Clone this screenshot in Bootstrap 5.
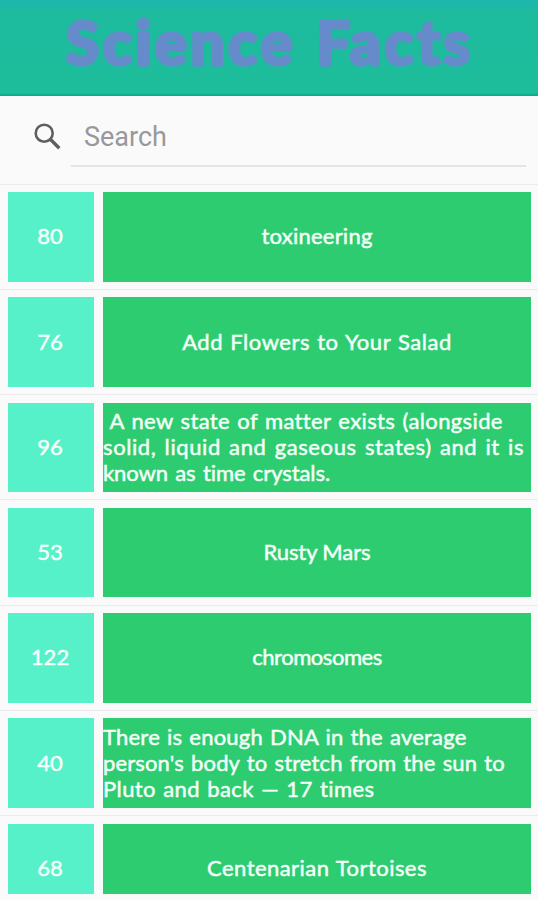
<!DOCTYPE html>
<html lang="en">
<head>
<meta charset="utf-8">
<meta name="viewport" content="width=device-width, initial-scale=1">
<title>Science Facts</title>
<link href="https://cdn.jsdelivr.net/npm/bootstrap@5.3.0/dist/css/bootstrap.min.css" rel="stylesheet">
<style>
body{font-family:Lato,sans-serif;background:#fafafb;height:900px}
.app-header{height:95.5px;background:linear-gradient(#1eb5ad 0,#1ebb9e 12px,#1dbd9b 93px,#12a888 95px)}
.app-title{font-size:60px;line-height:61px;font-weight:900;color:#668bcb;-webkit-text-stroke:3.2px #668bcb;letter-spacing:3.7px;word-spacing:2px;padding:12px 0 0 66px}
.search-bar{height:88px;padding:0 12px 0 34px}
.search-icon{width:27px;height:27px;margin-top:27px}
.search-field{margin-left:10px;height:71.5px;border-bottom:2px solid #e4e4e5}
.search-field input,.search-field input:focus{font:27px/32px Roboto,sans-serif;color:#555;background:none;box-shadow:none;padding:25px 0 0 13px}
.search-field input::placeholder{color:#989899;opacity:1}
.fact{height:105.3px;padding:7.5px 7px 7.3px 8px;border-top:1.5px solid #ececee;gap:9px;color:#f3fff8;font-size:22px;line-height:26px;-webkit-text-stroke:.5px #f3fff8}
.fact-last{height:79px}
.fact-num{width:86px;background:#56f0c9;padding:0 2px 1px 0}
.fact-text{background:#2ecc70;padding-bottom:1px}
.fact-last .fact-num,.fact-last .fact-text{padding-top:18px}
.line{white-space:pre}
.s-tox{letter-spacing:.24px}
.s-salad{letter-spacing:.55px;word-spacing:1px}
.s-a1{letter-spacing:.38px;word-spacing:1.3px}
.s-a2{letter-spacing:.6px;word-spacing:2px}
.s-a3{letter-spacing:-.08px;word-spacing:1.8px}
.s-mars{letter-spacing:-.1px}
.s-chr{letter-spacing:-.46px}
.s-d1{letter-spacing:.22px;word-spacing:1.2px}
.s-d2{letter-spacing:.14px;word-spacing:1.4px}
.s-d3{letter-spacing:.4px;word-spacing:1.3px}
.s-cen{letter-spacing:.45px;word-spacing:1px}
</style>
<script src="https://cdn.jsdelivr.net/npm/bootstrap@5.3.0/dist/js/bootstrap.bundle.min.js"></script>
</head>
<body class="overflow-hidden">
<header class="app-header"><h1 class="app-title m-0 text-nowrap">Science Facts</h1></header>
<div class="search-bar d-flex align-items-start">
  <svg class="search-icon flex-shrink-0" viewBox="0 0 27 27" fill="none" stroke="#5f5f60" aria-hidden="true"><circle cx="10.2" cy="10.2" r="8.5" stroke-width="2.6"/><path d="M16.3 16.3 25.3 25.3" stroke-width="3.4"/></svg>
  <div class="search-field flex-grow-1"><input class="form-control border-0 rounded-0" type="text" placeholder="Search" aria-label="Search"></div>
</div>
<main>
  <div class="fact d-flex">
    <div class="fact-num d-flex align-items-center justify-content-center flex-shrink-0">80</div>
    <div class="fact-text flex-grow-1 d-flex align-items-center justify-content-center"><span class="s-tox">toxineering</span></div>
  </div>
  <div class="fact d-flex">
    <div class="fact-num d-flex align-items-center justify-content-center flex-shrink-0">76</div>
    <div class="fact-text flex-grow-1 d-flex align-items-center justify-content-center"><span class="s-salad">Add Flowers to Your Salad</span></div>
  </div>
  <div class="fact d-flex">
    <div class="fact-num d-flex align-items-center justify-content-center flex-shrink-0">96</div>
    <div class="fact-text flex-grow-1 d-flex flex-column justify-content-center"><span class="line s-a1"> A new state of matter exists (alongside</span><span class="line s-a2">solid, liquid and gaseous states) and it is</span><span class="line s-a3">known as time crystals.</span></div>
  </div>
  <div class="fact d-flex">
    <div class="fact-num d-flex align-items-center justify-content-center flex-shrink-0">53</div>
    <div class="fact-text flex-grow-1 d-flex align-items-center justify-content-center"><span class="s-mars">Rusty Mars</span></div>
  </div>
  <div class="fact d-flex">
    <div class="fact-num d-flex align-items-center justify-content-center flex-shrink-0">122</div>
    <div class="fact-text flex-grow-1 d-flex align-items-center justify-content-center"><span class="s-chr">chromosomes</span></div>
  </div>
  <div class="fact d-flex">
    <div class="fact-num d-flex align-items-center justify-content-center flex-shrink-0">40</div>
    <div class="fact-text flex-grow-1 d-flex flex-column justify-content-center"><span class="line s-d1">There is enough DNA in the average</span><span class="line s-d2">person's body to stretch from the sun to</span><span class="line s-d3">Pluto and back — 17 times</span></div>
  </div>
  <div class="fact fact-last d-flex pb-0">
    <div class="fact-num d-flex align-items-center justify-content-center flex-shrink-0">68</div>
    <div class="fact-text flex-grow-1 d-flex align-items-center justify-content-center"><span class="s-cen">Centenarian Tortoises</span></div>
  </div>
</main>
</body>
</html>
